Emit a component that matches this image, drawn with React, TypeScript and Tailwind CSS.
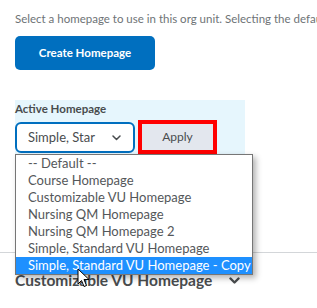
import React from "react";

const items = [
  "-- Default --",
  "Course Homepage",
  "Customizable VU Homepage",
  "Nursing QM Homepage",
  "Nursing QM Homepage 2",
  "Simple, Standard VU Homepage",
  "Simple, Standard VU Homepage - Copy",
];

export default function App() {
  return (
    <div
      className="relative w-[317px] h-[308px] overflow-hidden bg-white"
      style={{ fontFamily: "Lato, 'Liberation Sans', sans-serif" }}
    >
      <div className="pl-[15px] pt-[11px]">
        <p className="w-[302px] overflow-hidden whitespace-nowrap text-[11.5px] leading-[16px] text-[#6e7376]">
          Select a homepage to use in this org unit. Selecting the default
        </p>
        <button className="mt-[9px] w-[140px] h-[34px] rounded-[5px] bg-[#006fbf] text-white text-[11.5px] font-bold">
          Create Homepage
        </button>
        <div className="mt-[30px] w-[230px] h-[70px] bg-[#e6f6fd]">
          <div className="pt-[1px] text-[11.5px] leading-[16px] font-bold text-[#494c4e]">Active Homepage</div>
          <div className="mt-[3px] flex items-start gap-[3px]">
            <div className="mt-[2px] w-[120px] h-[31px] rounded-[6px] border-2 border-[#006fbf] bg-white flex items-center pl-[11px] pr-[12px]">
              <span className="flex-1 overflow-hidden whitespace-nowrap text-[13px] text-[#494c4e]">Simple, Star</span>
              <svg width="9" height="6" viewBox="0 0 9 6" className="shrink-0">
                <path d="M1 1 L4.5 4.5 L8 1" fill="none" stroke="#494c4e" strokeWidth="1.5" strokeLinecap="round" strokeLinejoin="round" />
              </svg>
            </div>
            <div className="w-[79px] h-[34px] border-[4px] border-[#ff0000] bg-[#e3e7ee] flex items-center justify-center text-[12px] text-[#494c4e]">
              Apply
            </div>
          </div>
        </div>
        <div className="mt-[82px] h-px bg-[#d3d6d9] -ml-[15px] w-[317px]" />
        <div className="mt-[17px] flex items-center gap-[17px]">
          <span className="text-[15.5px] leading-[20px] font-bold text-[#494c4e] whitespace-nowrap">Customizable VU Homepage</span>
          <svg width="11" height="8" viewBox="0 0 11 8" className="mt-[2px]">
            <path d="M1.5 1.5 L5.5 5.5 L9.5 1.5" fill="none" stroke="#494c4e" strokeWidth="2.4" strokeLinecap="round" strokeLinejoin="round" />
          </svg>
        </div>
      </div>

      <div className="absolute left-[15px] top-[154px] w-[238px] border border-[#767676] bg-white shadow-[3px_3px_6px_rgba(0,0,0,0.3)]">
        {items.map((it, i) => (
          <div
            key={it}
            className={
              "h-[17px] pl-[12px] text-[13px] leading-[17px] whitespace-nowrap " +
              (i === items.length - 1 ? "bg-[#1e90ff] text-white" : "text-[#54575a]")
            }
          >
            {it}
          </div>
        ))}
      </div>

      <svg className="absolute left-[77px] top-[268px]" width="14" height="21" viewBox="0 0 14 21">
        <path d="M1 1 L1 16 L4.5 12.5 L7 18.5 L9.5 17.5 L7 11.5 L12 11.5 Z" fill="white" stroke="black" strokeWidth="1" strokeLinejoin="round" />
      </svg>
    </div>
  );
}
